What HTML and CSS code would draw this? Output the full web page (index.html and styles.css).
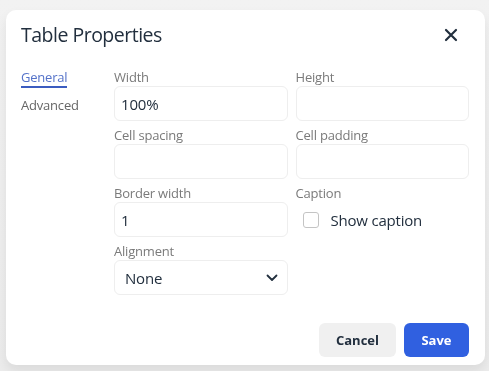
FILE: index.html
```html
<!DOCTYPE html>
<html lang="en">
<head>
  <meta charset="UTF-8">
  <meta name="viewport" content="width=device-width, initial-scale=1.0">
  <title>Table Properties</title>
  <link rel="stylesheet" href="styles.css">
</head>
<body>

  <!-- Table Properties dialog -->
  <div class="dialog">
    <div class="dialog-header">
      <h1>Table Properties</h1>
      <button class="close-btn" aria-label="Close">
        <svg width="14" height="14" viewBox="0 0 14 14">
          <path d="M2 2 L12 12 M12 2 L2 12" stroke="#222f3e" stroke-width="2.2" stroke-linecap="round"/>
        </svg>
      </button>
    </div>

    <div class="dialog-body">
      <div class="tabs">
        <a class="tab active" href="#">General</a>
        <a class="tab" href="#">Advanced</a>
      </div>

      <div class="form-grid">
        <div class="field">
          <label for="width">Width</label>
          <input type="text" id="width" value="100%">
        </div>
        <div class="field">
          <label for="height">Height</label>
          <input type="text" id="height">
        </div>
        <div class="field">
          <label for="cellspacing">Cell spacing</label>
          <input type="text" id="cellspacing">
        </div>
        <div class="field">
          <label for="cellpadding">Cell padding</label>
          <input type="text" id="cellpadding">
        </div>
        <div class="field">
          <label for="border">Border width</label>
          <input type="text" id="border" value="1">
        </div>
        <div class="field">
          <label>Caption</label>
          <label class="checkbox">
            <span class="box"></span>
            Show caption
          </label>
        </div>
        <div class="field">
          <label for="align">Alignment</label>
          <div class="select">
            <span>None</span>
            <svg width="12" height="8" viewBox="0 0 12 8">
              <path d="M1.5 1.5 L6 6 L10.5 1.5" fill="none" stroke="#222f3e" stroke-width="1.8" stroke-linecap="round" stroke-linejoin="round"/>
            </svg>
          </div>
        </div>
      </div>
    </div>

    <div class="dialog-footer">
      <button class="btn btn-secondary">Cancel</button>
      <button class="btn btn-primary">Save</button>
    </div>
  </div>

</body>
</html>
```

FILE: styles.css
```css
body {
  margin: 0;
  height: 371px;
  overflow: hidden;
  background: linear-gradient(#f2f2f2, #ececec);
  font-family: "Open Sans", Arial, sans-serif;
  color: #222f3e;
}

.dialog {
  position: fixed;
  top: 10px;
  left: 6px;
  width: 479px;
  height: 355px;
  background-color: #fff;
  border-radius: 10px;
  box-shadow: 0 6px 12px rgba(0, 0, 0, 0.08);
  display: flex;
  flex-direction: column;
}

.dialog-header {
  display: flex;
  align-items: center;
  justify-content: space-between;
  padding: 12px 27px 0 15px;
  height: 26px;
}
.dialog-header h1 {
  margin: 0;
  font-size: 19.5px;
  font-weight: 400;
  line-height: 26px;
  letter-spacing: -0.5px;
}
.close-btn {
  border: none;
  background: none;
  padding: 0;
  width: 14px;
  height: 14px;
  display: flex;
}

.dialog-body {
  display: flex;
  padding: 20px 16px 0 15px;
  flex: 1;
}

.tabs {
  width: 93px;
  display: flex;
  flex-direction: column;
  gap: 8px;
}
.tab {
  align-self: flex-start;
  font-size: 13px;
  line-height: 18px;
  color: #666;
  text-decoration: none;
  border-bottom: 2px solid transparent;
  letter-spacing: -0.2px;
}
.tab.active {
  color: #5472c9;
  border-bottom-color: #3b5cc0;
}

.form-grid {
  flex: 1;
  display: grid;
  grid-template-columns: 1fr 1fr;
  align-content: start;
  column-gap: 8px;
  row-gap: 5px;
}

.field label {
  display: block;
  font-size: 13px;
  line-height: 18px;
  color: #7a7a7a;
  letter-spacing: -0.2px;
}
.field input, .select {
  box-sizing: border-box;
  width: 100%;
  height: 35px;
  border: 1px solid #eeeeee;
  border-radius: 6px;
  padding: 0 6px;
  font-family: "Open Sans", Arial, sans-serif;
  font-size: 15px;
  color: #222f3e;
  outline: none;
  letter-spacing: -0.2px;
}
.select {
  display: flex;
  align-items: center;
  justify-content: space-between;
  padding: 0 9px 0 10px;
}

.field .checkbox {
  display: flex;
  align-items: center;
  gap: 12px;
  height: 35px;
  padding-left: 7px;
  font-size: 15px;
  color: #222f3e;
  letter-spacing: -0.2px;
}
.box {
  box-sizing: border-box;
  width: 16px;
  height: 16px;
  border: 1px solid #c4c4c4;
  border-radius: 3px;
}

.dialog-footer {
  display: flex;
  justify-content: flex-end;
  gap: 8px;
  padding: 0 16px 8px;
}
.btn {
  height: 34px;
  border: none;
  border-radius: 6px;
  font-family: "Open Sans", Arial, sans-serif;
  font-size: 13px;
  font-weight: 700;
  padding: 0 16px;
}
.btn-secondary {
  width: 77px;
  background-color: #f0f0f0;
  color: #222f3e;
}
.btn-primary {
  width: 65px;
  background-color: #3060e0;
  color: #fff;
}
```
